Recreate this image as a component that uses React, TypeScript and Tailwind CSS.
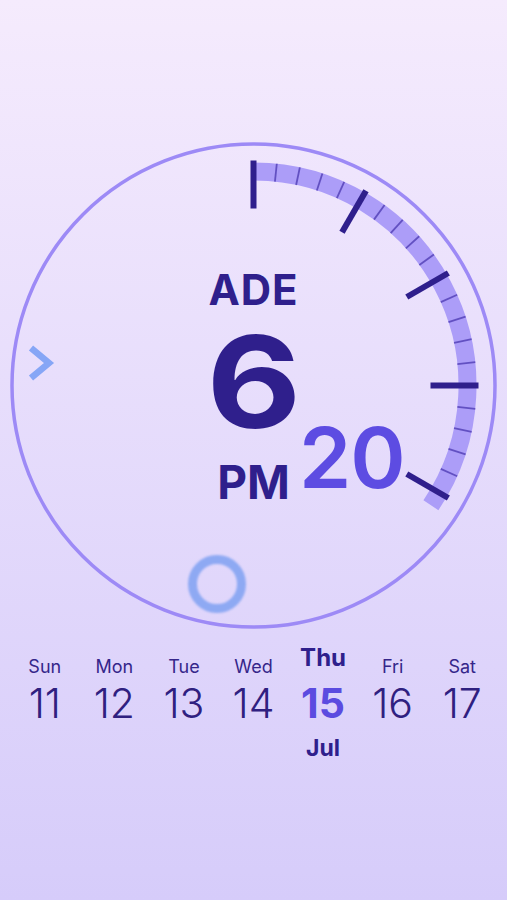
import React from "react";

const CX = 243.5;
const CY = 243.5;

const DAYS = [
  { name: "Sun", num: "11" },
  { name: "Mon", num: "12" },
  { name: "Tue", num: "13" },
  { name: "Wed", num: "14" },
  { name: "Thu", num: "15", active: true },
  { name: "Fri", num: "16" },
  { name: "Sat", num: "17" },
];

// point on the dial, angle in degrees clockwise from 12 o'clock
function pt(deg: number, r: number) {
  const a = (deg * Math.PI) / 180;
  return { x: CX + r * Math.sin(a), y: CY - r * Math.cos(a) };
}

function Dial() {
  const end = 124;
  const s = pt(0, 214);
  const e = pt(end, 214);
  const band = `M ${s.x} ${s.y} A 214 214 0 0 1 ${e.x} ${e.y}`;

  const minor: number[] = [];
  for (let d = 6; d < end; d += 6) if (d % 30 !== 0) minor.push(d);
  const major = [0, 30, 60, 90, 120];

  return (
    <svg width="487" height="487" viewBox="0 0 487 487" className="absolute inset-0">
      <circle cx={CX} cy={CY} r="241.5" fill="none" stroke="#9d8af6" strokeWidth="3.5" />
      <path d={band} fill="none" stroke="#ac9df8" strokeWidth="18" />
      {minor.map((d) => {
        const a = pt(d, 205);
        const b = pt(d, 223);
        return (
          <line key={d} x1={a.x} y1={a.y} x2={b.x} y2={b.y} stroke="#4a37b0" strokeOpacity="0.75" strokeWidth="1.8" />
        );
      })}
      {major.map((d) => {
        const a = pt(d, 177);
        const b = pt(d, 225);
        return (
          <line key={d} x1={a.x} y1={a.y} x2={b.x} y2={b.y} stroke="#2f1f8c" strokeWidth="6" />
        );
      })}
    </svg>
  );
}

export default function App() {
  return (
    <div
      className="w-[507px] h-[900px] overflow-hidden bg-gradient-to-b from-[#f5ebfd] to-[#d6ccfa] flex flex-col items-center"
      style={{ fontFamily: "Inter, 'Noto Sans', sans-serif" }}
    >
      {/* clock face */}
      <div className="relative mt-[142px] w-[487px] h-[487px] shrink-0">
        <Dial />

        <div className="absolute left-1/2 -translate-x-1/2 top-[132px] text-[42px] font-bold leading-[0.75] tracking-[1px] text-[#2f1f8c]">
          ADE
        </div>
        <div className="absolute left-1/2 -translate-x-1/2 scale-x-[1.14] top-[192px] text-[128px] font-bold leading-[0.75] text-[#2f1f8c]">
          6
        </div>
        <div className="absolute left-1/2 -translate-x-1/2 top-[323px] text-[46px] font-bold leading-[0.75] text-[#2f1f8c]">
          PM
        </div>
        <div className="absolute left-[289px] top-[284px] text-[84px] font-semibold leading-[0.75] tracking-[-1px] text-[#5d4ce2]">
          20
        </div>

        {/* left chevron */}
        <svg width="32" height="44" viewBox="0 0 32 44" className="absolute left-[14px] top-[199px]">
          <polyline points="7,7 25,22 7,37" fill="none" stroke="#86a6f6" strokeWidth="6.5" />
        </svg>

        {/* ring handle */}
        <div className="absolute left-[178px] top-[413px] w-[58px] h-[58px] rounded-full border-[9px] border-[#8ea9f3] blur-[0.8px]" />
      </div>

      {/* week strip */}
      <div className="mt-[23px] w-[487px] grid grid-cols-7">
        {DAYS.map((d) => (
          <div key={d.name} className="flex flex-col items-center">
            <div className="h-[24px] flex items-end">
              {d.active ? (
                <span className="mb-[6px] text-[24px] font-bold leading-none text-[#2f1f8c]">{d.name}</span>
              ) : (
                <span className="text-[18px] font-normal leading-none text-[#35268a]">{d.name}</span>
              )}
            </div>
            {d.active ? (
              <span className="mt-[7px] text-[41px] font-bold leading-none text-[#5b4be0]">{d.num}</span>
            ) : (
              <span className="mt-[7px] text-[41px] font-light leading-none text-[#2f2080]">{d.num}</span>
            )}
            {d.active && (
              <span className="mt-[13px] text-[23px] font-bold leading-none text-[#2f1f8c]">Jul</span>
            )}
          </div>
        ))}
      </div>
    </div>
  );
}
